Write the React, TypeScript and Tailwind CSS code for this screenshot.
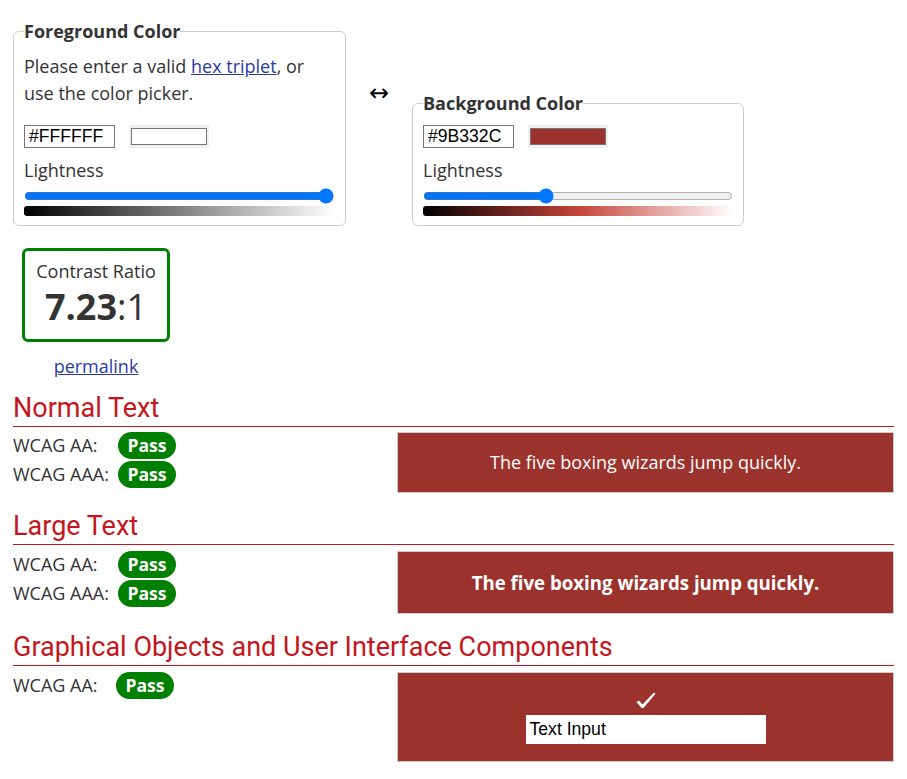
import React from 'react';

const RED = 'text-[#c4161c]';

function Swatch({ color }: { color: string }) {
  return (
    <div className="w-[80px] h-[23px] bg-[#efefef] px-[2px] py-[3px] ml-[14px]">
      <div className="w-full h-full border border-[#767676]" style={{ background: color }} />
    </div>
  );
}

function Picker({ hex, color, value, gradient }: { hex: string; color: string; value: number; gradient: string }) {
  return (
    <>
      <div className="flex items-center h-[23px]">
        <div className="w-[91px] h-[23px] border border-[#767676] bg-white pl-[4px] text-[17.6px] leading-[21px] text-black font-['Liberation_Sans',Arial,sans-serif]">
          {hex}
        </div>
        <Swatch color={color} />
      </div>
      <div className="mt-[9px] leading-[27px]">Lightness</div>
      <input
        type="range"
        min={0}
        max={100}
        defaultValue={value}
        className="mt-[4px] w-[310px] h-[16px] block accent-[#0075ff]"
      />
      <div className={`mt-[2px] w-[310px] h-[10px] rounded-l-[3px] ${gradient}`} />
    </>
  );
}

function Badge() {
  return (
    <span className="inline-flex items-center justify-center w-[58px] h-[27px] rounded-full bg-[#008000] text-white font-bold text-[17.6px]">
      Pass
    </span>
  );
}

function Row({ label, w }: { label: string; w: string }) {
  return (
    <div className="flex items-center h-[27px]">
      <span className={w}>{label}</span>
      <Badge />
    </div>
  );
}

function Heading({ children, first }: { children: React.ReactNode; first?: boolean }) {
  return (
    <h2 className={`${first ? 'mt-[14px]' : 'mt-[17px]'} leading-[32px] pb-[2px] border-b border-[#c4161c] ${RED} text-[27px] font-['Roboto',sans-serif]`}>
      {children}
    </h2>
  );
}

export default function App() {
  return (
    <div className="min-h-screen bg-white pt-[19px] px-[13px] text-[#333] text-[18px] font-['Open_Sans',sans-serif]">
      {/* pickers */}
      <div className="flex items-end">
        <fieldset className="w-[333px] border border-[#ccc] rounded-[6px] px-[10px] pt-[10px] pb-[9px]">
          <legend className="font-bold leading-[24px]">Foreground Color</legend>
          <p className="leading-[27px] mb-[18px] pr-[10px]">
            Please enter a valid <a href="#" className="underline text-[#2a3aa6]">hex triplet</a>, or use the color picker.
          </p>
          <Picker hex="#FFFFFF" color="#FFFFFF" value={100} gradient="bg-[linear-gradient(to_right,#000,#fff)]" />
        </fieldset>
        <div className="self-start mt-[62px] mx-[20px] w-[26px] text-center text-[24px] leading-[24px] text-black font-['DejaVu_Sans',sans-serif]">
          ↔
        </div>
        <fieldset className="w-[332px] border border-[#ccc] rounded-[6px] px-[10px] pt-[10px] pb-[9px]">
          <legend className="font-bold leading-[24px]">Background Color</legend>
          <Picker hex="#9B332C" color="#9B332C" value={39} gradient="bg-[linear-gradient(to_right,#000,#c64339,#fff)]" />
        </fieldset>
      </div>

      {/* ratio */}
      <div className="ml-[9px] mt-[22px] w-[148px] flex flex-col items-center">
        <div className="w-[148px] h-[94px] border-[3px] border-[#008000] rounded-[6px] flex flex-col items-center pt-[8px]">
          <div className="leading-[24px]">Contrast Ratio</div>
          <div className="mt-[4px] text-[36px] leading-[40px]">
            <span className="font-bold">7.23</span>:1
          </div>
        </div>
        <a href="#" className="mt-[12px] leading-[24px] underline text-[#2a3aa6]">permalink</a>
      </div>

      {/* normal text */}
      <Heading first>Normal Text</Heading>
      <div className="flex mt-[5px]">
        <div className="flex-1 flex flex-col gap-[2px]">
          <Row label="WCAG AA:" w="w-[105px]" />
          <Row label="WCAG AAA:" w="w-[105px]" />
        </div>
        <div className="w-[497px] h-[61px] border border-[#ccc] bg-[#9B332C] text-white flex items-center justify-center">
          The five boxing wizards jump quickly.
        </div>
      </div>

      {/* large text */}
      <Heading>Large Text</Heading>
      <div className="flex mt-[6px]">
        <div className="flex-1 flex flex-col gap-[2px]">
          <Row label="WCAG AA:" w="w-[105px]" />
          <Row label="WCAG AAA:" w="w-[105px]" />
        </div>
        <div className="w-[497px] h-[63px] border border-[#ccc] bg-[#9B332C] text-white font-bold text-[18.67px] flex items-center justify-center">
          The five boxing wizards jump quickly.
        </div>
      </div>

      {/* graphical objects */}
      <Heading>Graphical Objects and User Interface Components</Heading>
      <div className="flex mt-[6px]">
        <div className="flex-1">
          <Row label="WCAG AA:" w="w-[103px]" />
        </div>
        <div className="w-[497px] h-[90px] border border-[#ccc] bg-[#9B332C] flex flex-col items-center pt-[19px]">
          <svg width="20" height="17" viewBox="0 0 20 17" className="ml-[1px]">
            <polygon points="0.5,10 3,8.5 6.5,12.5 18,0.5 19.5,1.8 7.5,16 5.5,16" fill="#fff" />
          </svg>
          <div className="mt-[6px] w-[240px] h-[29px] bg-white pl-[4px] text-black text-[17.6px] leading-[29px] font-['Liberation_Sans',Arial,sans-serif]">
            Text Input
          </div>
        </div>
      </div>
    </div>
  );
}
